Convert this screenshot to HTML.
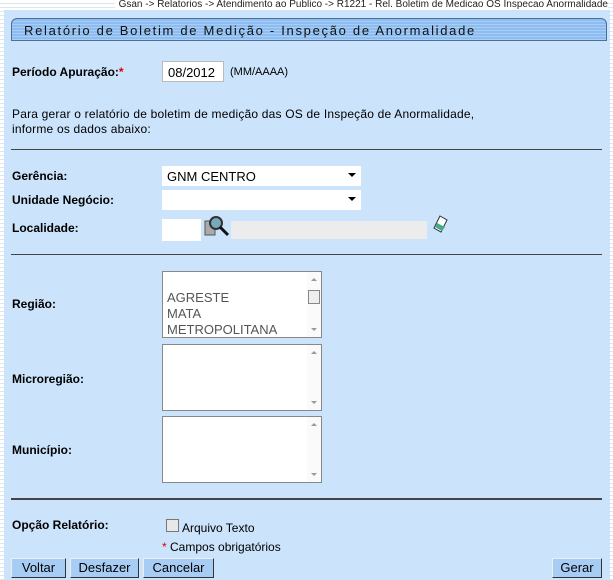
<!DOCTYPE html>
<html><head><meta charset="utf-8"><style>
body{margin:0;width:613px;height:580px;overflow:hidden;background:#fff;font-family:"Liberation Sans",Arial,sans-serif;font-size:12px;position:relative;
background-image:repeating-linear-gradient(#fff 0 3px,#dde6ee 3px 4px);}
.p{position:absolute;left:4px;top:10px;width:606px;height:570px;background:#cbe3fb;}
.crumb{position:absolute;right:5px;top:0;font-size:10px;color:#222;background:#fff;padding-left:4px;line-height:10px}
.tb{position:absolute;left:11px;top:18px;width:594px;height:21px;border:1px solid #4a6f98;border-radius:6px 6px 0 0;
background:repeating-linear-gradient(#8dbdf0 0 2px,#a9cdf4 2px 3px);}
.tb span{position:absolute;left:12px;top:4px;font-size:13px;letter-spacing:1.7px;color:#111}
.a{position:absolute;color:#000}
.b{font-weight:bold;font-size:12px}
.in{position:absolute;background:#fff;border:1px solid #bbb;box-sizing:border-box}
.hr{position:absolute;left:11px;width:591px;background:#444}
.btn{position:absolute;top:558px;height:20px;background:#a8cdf4;border:1px solid #333;box-sizing:border-box;font-size:13px;text-align:center;line-height:18px;border-top-color:#eee;border-left-color:#eee}
.sel:after{content:"";position:absolute;right:5px;top:7px;border:4px solid transparent;border-top:4px solid #000;border-bottom:0}
.lb{position:absolute;background:#fff;border:1px solid #888;box-sizing:border-box;width:160px;left:162px}
.sb{position:absolute;right:0;top:0;bottom:0;width:14px;background:#fafafa}
.sb:before{content:"";position:absolute;left:4px;top:6px;border:3px solid transparent;border-bottom:3px solid #999;border-top:0}
.sb:after{content:"";position:absolute;left:4px;bottom:6px;border:3px solid transparent;border-top:3px solid #999;border-bottom:0}
</style></head><body>
<div class="p"></div>
<div class="crumb">Gsan -&gt; Relatorios -&gt; Atendimento ao Publico -&gt; R1221 - Rel. Boletim de Medicao OS Inspecao Anormalidade</div>
<div class="tb"><span>Relatório de Boletim de Medição - Inspeção de Anormalidade</span></div>
<div class="a b" style="left:12px;top:65px">Período Apuração:<span style="color:#d00">*</span></div>
<div class="in" style="left:162px;top:61px;width:62px;height:21px;font-size:13px;padding:3px 5px">08/2012</div>
<div class="a" style="left:230px;top:66px;font-size:11px">(MM/AAAA)</div>
<div class="a" style="left:12px;top:107px;line-height:15px;letter-spacing:0.2px">Para gerar o relatório de boletim de medição das OS de Inspeção de Anormalidade,<br>informe os dados abaixo:</div>
<div class="hr" style="top:149px;height:1px"></div>
<div class="a b" style="left:12px;top:169px">Gerência:</div>
<div class="in sel" style="left:162px;top:166px;width:199px;height:20px;border:none;font-size:13px;padding:3px 5px">GNM CENTRO</div>
<div class="a b" style="left:12px;top:193px">Unidade Negócio:</div>
<div class="in sel" style="left:162px;top:190px;width:199px;height:20px;border:none"></div>
<div class="a b" style="left:12px;top:221px">Localidade:</div>
<div class="in" style="left:162px;top:219px;width:39px;height:22px;border:none"></div>
<svg style="position:absolute;left:204px;top:215px" width="28" height="24"><rect x="1" y="6" width="10" height="14" fill="#aaa" stroke="#555"/><circle cx="12" cy="8" r="6" fill="#7ab" stroke="#333" stroke-width="2"/><line x1="16" y1="12" x2="24" y2="20" stroke="#111" stroke-width="3"/></svg>
<div class="in" style="left:231px;top:221px;width:196px;height:18px;border:none;background:#ececec"></div>
<svg style="position:absolute;left:431px;top:214px" width="18" height="20"><path d="M9 2 L16 6 L10 18 L3 14 Z" fill="#fff" stroke="#333"/><path d="M6 9 L14 13 L11 17 L4 13Z" fill="#4a8"/></svg>
<div class="hr" style="top:254px;height:1px"></div>
<div class="lb" style="top:271px;height:67px"><div class="sb"><div style="position:absolute;left:1px;top:18px;width:12px;height:14px;border:1px solid #888;background:#eee;box-sizing:border-box"></div></div>
<div style="position:absolute;left:4px;top:18px;font-size:13px;color:#555;line-height:16px">AGRESTE<br>MATA<br>METROPOLITANA</div></div>
<div class="a b" style="left:12px;top:297px">Região:</div>
<div class="lb" style="top:344px;height:67px"><div class="sb"></div></div>
<div class="a b" style="left:12px;top:372px">Microregião:</div>
<div class="lb" style="top:416px;height:67px"><div class="sb"></div></div>
<div class="a b" style="left:12px;top:443px">Município:</div>
<div class="hr" style="top:498px;height:2px"></div>
<div class="a b" style="left:12px;top:518px">Opção Relatório:</div>
<div style="position:absolute;left:166px;top:519px;width:11px;height:11px;border:1px solid #777;background:#e8e8e8"></div>
<div class="a" style="left:182px;top:521px">Arquivo Texto</div>
<div class="a" style="left:162px;top:540px"><span style="color:#d00">*</span> Campos obrigatórios</div>
<div class="btn" style="left:11px;width:55px">Voltar</div>
<div class="btn" style="left:70px;width:69px">Desfazer</div>
<div class="btn" style="left:143px;width:71px">Cancelar</div>
<div class="btn" style="left:552px;width:50px">Gerar</div>
</body></html>
